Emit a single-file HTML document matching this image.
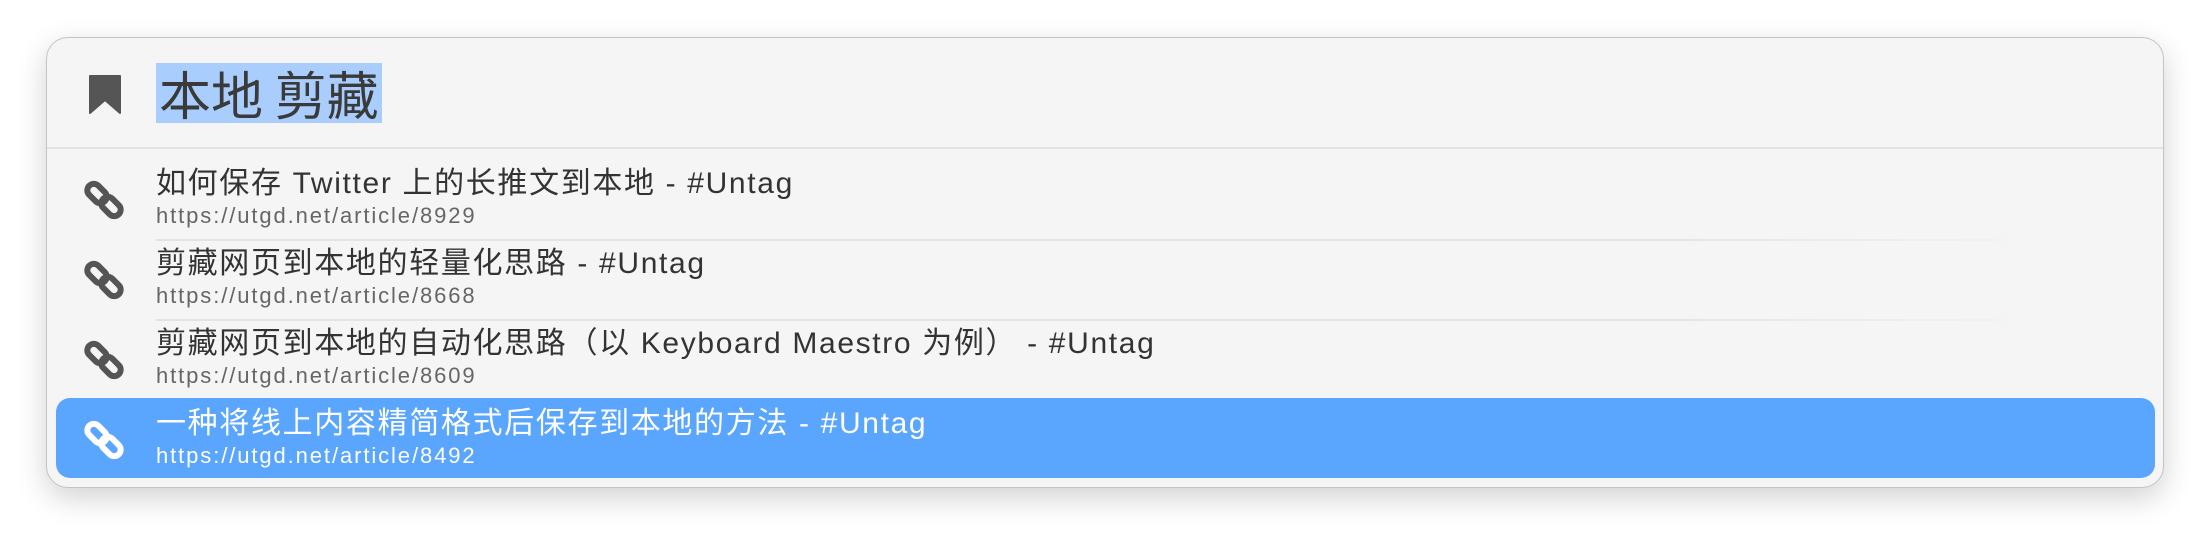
<!DOCTYPE html>
<html><head><meta charset="utf-8"><style>
*{margin:0;padding:0;box-sizing:border-box}
body{width:2210px;height:542px;background:#fff;position:relative;overflow:hidden;font-family:"Liberation Sans","Noto Sans CJK SC",sans-serif}
.panel{position:absolute;left:46px;top:37px;width:2118px;height:451px;background:#f5f5f5;border:1px solid #c4c4c4;border-radius:22px;box-shadow:0 10px 30px rgba(0,0,0,0.18)}
.q{position:absolute;left:109px;top:25px;height:60px;padding:0 3px;background:#a9cdfc;font-size:52px;line-height:60px;color:#3a3a3a;font-family:"Noto Sans CJK SC",sans-serif}
.div{position:absolute;left:0;right:0;top:109px;height:2px;background:#e2e2e2}
.sep{position:absolute;left:109px;width:1890px;height:2px;background:linear-gradient(to right,#e4e4e4 80%,rgba(228,228,228,0))}
.sel{position:absolute;left:9px;top:360px;width:2099px;height:80px;background:#5aa5fe;border-radius:14px}
.t{position:absolute;left:109px;font-size:30px;line-height:34px;color:#333;white-space:nowrap;letter-spacing:1.65px}
.u{position:absolute;left:109px;font-size:22px;line-height:24px;color:#666;white-space:nowrap;letter-spacing:1.9px}
.w{color:#fff}
.ic{position:absolute;left:35px;width:44px;height:44px}
</style></head><body>
<div class="panel">
<svg style="position:absolute;left:41px;top:36px" width="34" height="40" viewBox="0 0 34 40"><path d="M2 2h30v37l-15-13-15 13z" fill="#555" stroke="#555" stroke-width="2" stroke-linejoin="round"/></svg>
<div class="q">本地 剪藏</div>
<div class="div"></div>
<div class="sep" style="top:201px"></div>
<div class="sep" style="top:281px"></div>
<div class="sel"></div>

<svg class="ic" style="top:140px" viewBox="0 0 44 44"><g fill="none" stroke="#555" stroke-width="6"><rect x="4" y="9" width="22" height="13" rx="6.5" transform="rotate(45 15 15.5)"/><rect x="18" y="22" width="22" height="13" rx="6.5" transform="rotate(45 29 28.5)"/></g></svg>
<div class="t" style="top:129px">如何保存 Twitter 上的长推文到本地 - #Untag</div>
<div class="u" style="top:166px">https://utgd.net/article/8929</div>

<svg class="ic" style="top:220px" viewBox="0 0 44 44"><g fill="none" stroke="#555" stroke-width="6"><rect x="4" y="9" width="22" height="13" rx="6.5" transform="rotate(45 15 15.5)"/><rect x="18" y="22" width="22" height="13" rx="6.5" transform="rotate(45 29 28.5)"/></g></svg>
<div class="t" style="top:209px">剪藏网页到本地的轻量化思路 - #Untag</div>
<div class="u" style="top:246px">https://utgd.net/article/8668</div>

<svg class="ic" style="top:300px" viewBox="0 0 44 44"><g fill="none" stroke="#555" stroke-width="6"><rect x="4" y="9" width="22" height="13" rx="6.5" transform="rotate(45 15 15.5)"/><rect x="18" y="22" width="22" height="13" rx="6.5" transform="rotate(45 29 28.5)"/></g></svg>
<div class="t" style="top:289px">剪藏网页到本地的自动化思路（以 Keyboard Maestro 为例） - #Untag</div>
<div class="u" style="top:326px">https://utgd.net/article/8609</div>

<svg class="ic" style="top:380px" viewBox="0 0 44 44"><g fill="none" stroke="#fff" stroke-width="6"><rect x="4" y="9" width="22" height="13" rx="6.5" transform="rotate(45 15 15.5)"/><rect x="18" y="22" width="22" height="13" rx="6.5" transform="rotate(45 29 28.5)"/></g></svg>
<div class="t w" style="top:369px">一种将线上内容精简格式后保存到本地的方法 - #Untag</div>
<div class="u w" style="top:406px">https://utgd.net/article/8492</div>
</div>
</body></html>
